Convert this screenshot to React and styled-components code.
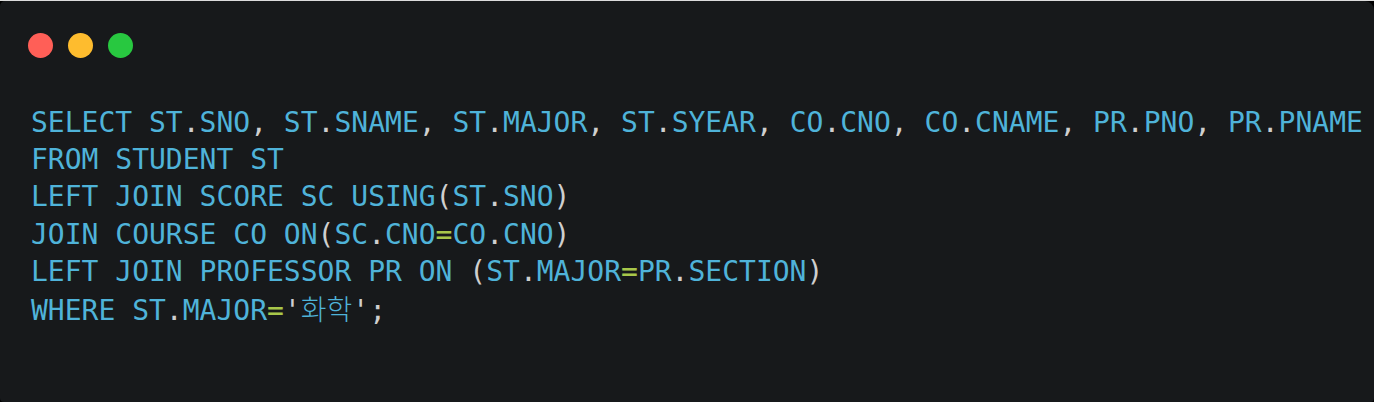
import styled, { createGlobalStyle } from "styled-components"

const GlobalStyle = createGlobalStyle`
    html, body {
        margin: 0;
        padding: 0;
        background: #000;
    }
`

const Frame = styled.div`
    border-top: 1px solid #dcdcdc;
    background: #000;
    height: 401px;
`

const Window = styled.div`
    height: 401px;
    box-sizing: border-box;
    background: #17191b;
    border-radius: 5px 9px 4px 4px;
    padding: 32px 0 0 31px;
    overflow: hidden;
`

const Controls = styled.div`
    display: flex;
    gap: 15px;
    margin-left: -3px;
`

const Dot = styled.span`
    width: 25px;
    height: 25px;
    border-radius: 50%;
    background: ${props => props.color};
`

const Code = styled.pre`
    margin: 46px 0 0;
    font-family: "DejaVu Sans Mono", "Noto Sans CJK KR", monospace;
    font-size: 28px;
    line-height: 37.2px;
    color: #4fb3d9;
    white-space: pre;
`

const colors = {
    word: "#4fb3d9",
    punct: "#cfcfcf",
    op: "#a8c74a",
}

const Token = styled.span`
    color: ${props => colors[props.$kind]};
`

const Hangul = styled.span`
    font-family: "Noto Sans CJK KR", sans-serif;
    font-weight: 300;
    color: #4fb3d9;
`

const lines = [
    "SELECT ST.SNO, ST.SNAME, ST.MAJOR, ST.SYEAR, CO.CNO, CO.CNAME, PR.PNO, PR.PNAME",
    "FROM STUDENT ST",
    "LEFT JOIN SCORE SC USING(ST.SNO)",
    "JOIN COURSE CO ON(SC.CNO=CO.CNO)",
    "LEFT JOIN PROFESSOR PR ON (ST.MAJOR=PR.SECTION)",
    "WHERE ST.MAJOR='화학';",
]

function tokenize(line) {
    return line.split(/([.,()';=]|[\uac00-\ud7a3]+)/).filter(Boolean).map((part, i) => {
        if (part === "=") return <Token key={i} $kind="op">{part}</Token>
        if (/^[.,()';]$/.test(part)) return <Token key={i} $kind="punct">{part}</Token>
        if (/[\uac00-\ud7a3]/.test(part)) return <Hangul key={i}>{part}</Hangul>
        return <Token key={i} $kind="word">{part}</Token>
    })
}

export default function App() {
    return(
        <>
            <GlobalStyle />
            <Frame>
                <Window>
                    <Controls>
                        <Dot color="#ff5f57" />
                        <Dot color="#febc2e" />
                        <Dot color="#28c840" />
                    </Controls>
                    <Code>
                        {lines.map((line, i) => (
                            <div key={i}>{tokenize(line)}</div>
                        ))}
                    </Code>
                </Window>
            </Frame>
        </>
    )
}
